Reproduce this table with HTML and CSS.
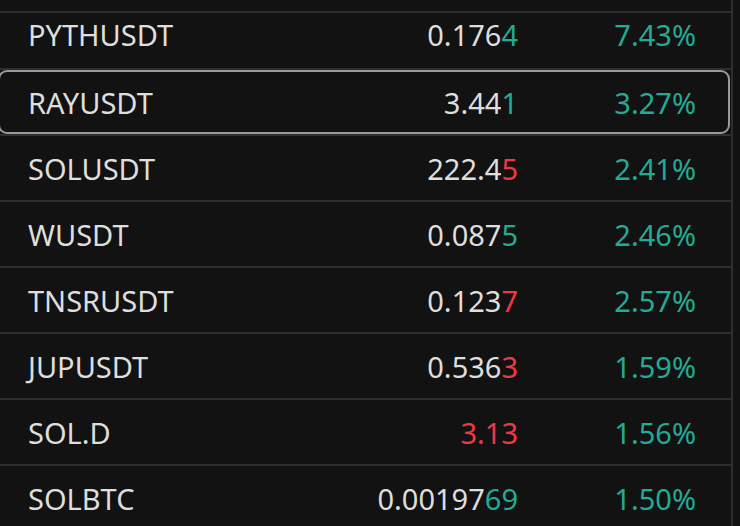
FILE: index.html
```html
<!DOCTYPE html>
<html lang="en">
<head>
<meta charset="utf-8">
<title>Watchlist</title>
<link rel="stylesheet" href="styles.css">
</head>
<body>
<div class="list">
  <div class="spacer"></div>
  <div class="row first">
    <span class="sym">PYTHUSDT</span>
    <span class="price">0.176<span class="up">4</span></span>
    <span class="chg up">7.43%</span>
  </div>
  <div class="row selected">
    <span class="sym">RAYUSDT</span>
    <span class="price">3.44<span class="up">1</span></span>
    <span class="chg up">3.27%</span>
  </div>
  <div class="row">
    <span class="sym">SOLUSDT</span>
    <span class="price">222.4<span class="down">5</span></span>
    <span class="chg up">2.41%</span>
  </div>
  <div class="row">
    <span class="sym">WUSDT</span>
    <span class="price">0.087<span class="up">5</span></span>
    <span class="chg up">2.46%</span>
  </div>
  <div class="row">
    <span class="sym">TNSRUSDT</span>
    <span class="price">0.123<span class="down">7</span></span>
    <span class="chg up">2.57%</span>
  </div>
  <div class="row">
    <span class="sym">JUPUSDT</span>
    <span class="price">0.536<span class="down">3</span></span>
    <span class="chg up">1.59%</span>
  </div>
  <div class="row">
    <span class="sym">SOL.D</span>
    <span class="price down">3.13</span>
    <span class="chg up">1.56%</span>
  </div>
  <div class="row">
    <span class="sym">SOLBTC</span>
    <span class="price">0.00197<span class="up">69</span></span>
    <span class="chg up">1.50%</span>
  </div>
</div>
</body>
</html>
```

FILE: styles.css
```css
html, body {
  margin: 0;
  padding: 0;
  background: #121212;
  height: 100%;
  overflow: hidden;
}

.list {
  width: 731px;
  height: 526px;
  border-right: 2px solid #2e2e2e;
  font-family: "Noto Sans", "Open Sans", sans-serif;
  font-size: 29px;
  color: #dedede;
}

.spacer {
  height: 11px;
}

.row {
  position: relative;
  display: grid;
  grid-template-columns: 1fr auto 178px;
  align-items: center;
  height: 64px;
  padding: 0 35px 0 28px;
  border-top: 2px solid #2e2e2e;
}

.row.first {
  height: 55px;
  align-items: start;
}

.row.first > span {
  margin-top: 2px;
}

.sym {
  text-align: left;
}

.price, .chg {
  text-align: right;
}

.up {
  color: #22ab94;
}

.down {
  color: #f23645;
}

.selected::after {
  content: "";
  position: absolute;
  top: 0;
  bottom: 0;
  left: -2px;
  right: 1px;
  border: 2px solid #9a9a9a;
  border-radius: 9px;
  pointer-events: none;
}
```
